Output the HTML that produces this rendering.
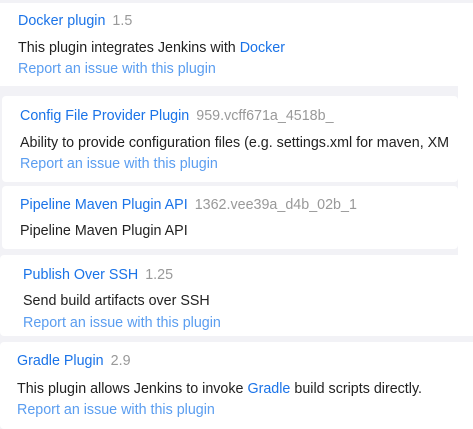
<html><head><style>
body{margin:0;width:473px;height:429px;background:#fff;position:relative;overflow:hidden;font-family:"Liberation Sans","Noto Sans CJK KR",sans-serif;font-size:14.3px;}
.g{position:absolute;background:#f2f2f6}
.c{position:absolute;background:#fff;border-radius:4px}
.t{position:absolute;white-space:nowrap;line-height:16px}
.b{color:#1a73e8}.v{color:#999;margin-left:7px}.d{color:#222}.r{color:#5a9df0}
</style></head><body>
<div class="g" style="left:0;top:0;width:458px;height:429px"></div>
<div class="g" style="left:343px;top:0;width:130px;height:3px"></div>
<div class="g" style="left:0;top:336px;width:473px;height:6px"></div>
<div class="c" style="left:0;top:3px;width:473px;height:83px;border-radius:0 0 4px 0"></div>
<div class="c" style="left:2px;top:96px;width:456px;height:86px"></div>
<div class="c" style="left:2px;top:186px;width:456px;height:63px"></div>
<div class="c" style="left:0;top:255px;width:473px;height:81px"></div>
<div class="c" style="left:0;top:342px;width:473px;height:87px"></div>
<div class="t" style="left:18px;top:13px"><span class="b">Docker plugin</span><span class="v">1.5</span></div>
<div class="t d" style="left:18px;top:40px">This plugin integrates Jenkins with <span class="b">Docker</span></div>
<div class="t r" style="left:18px;top:61px">Report an issue with this plugin</div>
<div class="t" style="left:20px;top:108px"><span class="b">Config File Provider Plugin</span><span class="v">959.vcff671a_4518b_</span></div>
<div class="t d" style="left:20px;top:135px">Ability to provide configuration files (e.g. settings.xml for maven, XM</div>
<div class="t r" style="left:20px;top:156px">Report an issue with this plugin</div>
<div class="t" style="left:20px;top:197px"><span class="b">Pipeline Maven Plugin API</span><span class="v">1362.vee39a_d4b_02b_1</span></div>
<div class="t d" style="left:20px;top:223px">Pipeline Maven Plugin API</div>
<div class="t" style="left:23px;top:267px"><span class="b">Publish Over SSH</span><span class="v">1.25</span></div>
<div class="t d" style="left:23px;top:293px">Send build artifacts over SSH</div>
<div class="t r" style="left:23px;top:315px">Report an issue with this plugin</div>
<div class="t" style="left:17px;top:353px"><span class="b">Gradle Plugin</span><span class="v">2.9</span></div>
<div class="t d" style="left:17px;top:381px">This plugin allows Jenkins to invoke <span class="b">Gradle</span> build scripts directly.</div>
<div class="t r" style="left:17px;top:402px">Report an issue with this plugin</div>
</body></html>
